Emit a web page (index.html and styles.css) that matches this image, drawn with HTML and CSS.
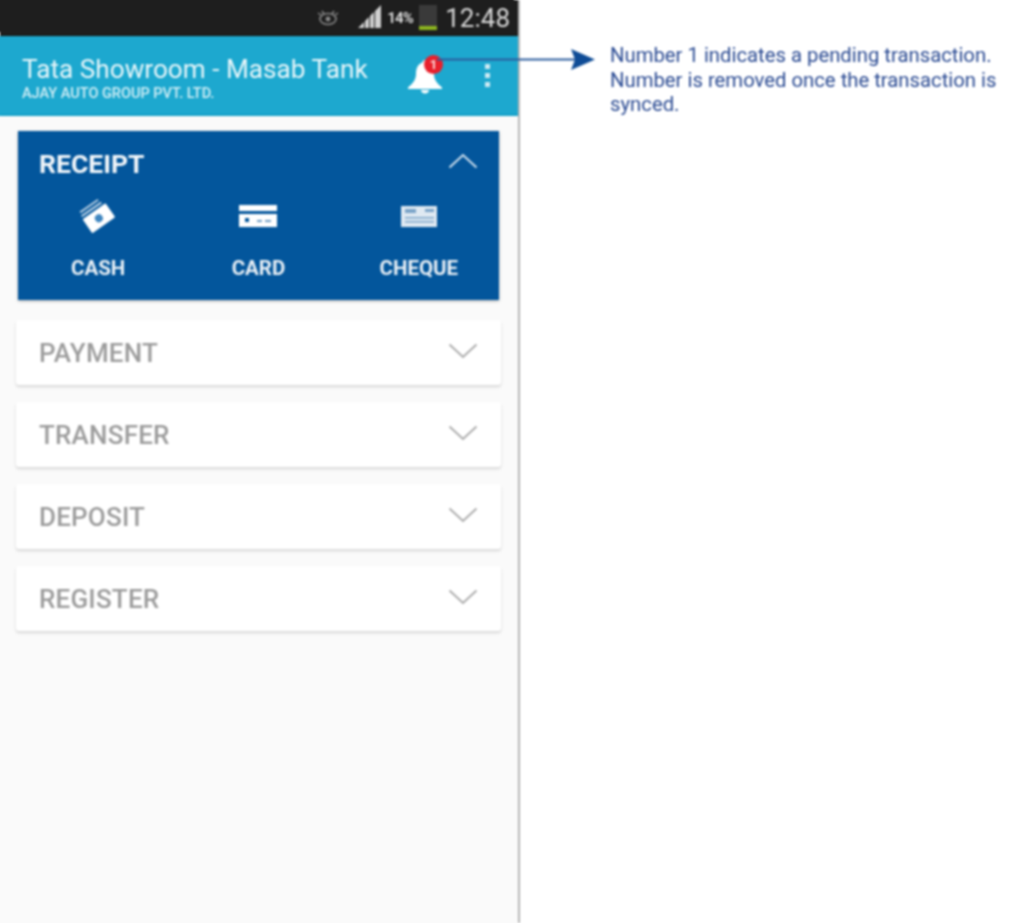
FILE: index.html
```html
<!DOCTYPE html>
<html lang="en">
  <head>
    <meta charset="UTF-8" />
    <meta name="viewport" content="width=device-width, initial-scale=1.0" />
    <title>Tata Showroom</title>
    <link rel="stylesheet" href="styles.css">
  </head>

  <body>
    <div class="page">
      <div class="phone">
        <!-- status bar -->
        <div class="statusBar">
          <svg class="eyeIcon" width="24" height="18" viewBox="0 0 24 18">
            <path d="M2 4l3 2M22 4l-3 2M6 2l2 3M18 2l-2 3" stroke="#8a8a8a" stroke-width="1.5" fill="none" />
            <ellipse cx="12" cy="10" rx="8" ry="5.5" fill="none" stroke="#8a8a8a" stroke-width="1.6" />
            <circle cx="12" cy="10" r="2.4" fill="#8a8a8a" />
          </svg>
          <svg class="signalIcon" width="26" height="24" viewBox="0 0 26 24">
            <path d="M1 23L7 17V23ZM8 16L12 12V23H8ZM13 11L17 7V23H13ZM18 6L24 0V23H18Z" fill="#d0d0d0" />
          </svg>
          <span class="battPct">14%</span>
          <div class="battery"><div class="battLevel"></div></div>
          <span class="clock">12:48</span>
        </div>

        <!-- app bar -->
        <header class="appBar">
          <div class="appTitles">
            <div class="appTitle">Tata Showroom - Masab Tank</div>
            <div class="appSub">AJAY AUTO GROUP PVT. LTD.</div>
          </div>
          <div class="bellWrap">
            <svg width="36" height="36" viewBox="0 0 36 36">
              <path d="M18 1c-1.500 0-2.500 1-2.500 2.500C10.500 5 9 10 9 15c0 5-2.500 9-8 13.500V30h34v-1.500C29.500 24 27 20 27 15c0-5-1.500-10-6.500-11.500C20.500 2 19.500 1 18 1Z" fill="#fff" />
              <path d="M14 31h8c0 2-1.800 3.500-4 3.500S14 33 14 31Z" fill="#fff" />
            </svg>
            <span class="badge">1</span>
          </div>
          <div class="dots"><i></i><i></i><i></i></div>
        </header>

        <main class="content">
          <section class="receipt">
            <div class="cardHead">
              <span class="receiptTitle">RECEIPT</span>
              <svg class="chev" width="30" height="16" viewBox="0 0 30 16">
                <path d="M1.500 14.500L15 2L28.500 14.500" fill="none" stroke="#cfe0ee" stroke-width="2" />
              </svg>
            </div>
            <div class="receiptOpts">
              <div class="opt">
                <svg width="42" height="38" viewBox="0 0 42 38">
                  <g transform="rotate(-35 21 19)" fill="#fff">
                    <rect x="9" y="4" width="22" height="2" opacity="0.7" />
                    <rect x="8" y="8" width="24" height="2" opacity="0.8" />
                    <rect x="7" y="12" width="28" height="17" rx="1" />
                    <circle cx="21" cy="20.500" r="4" fill="#3f86c0" />
                  </g>
                </svg>
                <span class="optLabel">CASH</span>
              </div>
              <div class="opt">
                <svg width="42" height="38" viewBox="0 0 42 38">
                  <rect x="2" y="7" width="38" height="6" fill="#fff" />
                  <rect x="2" y="16" width="38" height="13" fill="#fff" />
                  <rect x="8" y="20" width="4" height="4" fill="#03569c" />
                  <rect x="20" y="22" width="5" height="2" fill="#6d9cc4" />
                  <rect x="28" y="22" width="6" height="2" fill="#6d9cc4" />
                </svg>
                <span class="optLabel">CARD</span>
              </div>
              <div class="opt">
                <svg width="42" height="38" viewBox="0 0 42 38">
                  <rect x="3" y="8" width="36" height="21" fill="#dfe9f2" />
                  <rect x="7" y="11" width="11" height="4" fill="#7aa3c8" />
                  <rect x="27" y="11" width="9" height="3" fill="#7aa3c8" />
                  <rect x="7" y="19" width="29" height="1.500" fill="#7aa3c8" />
                  <rect x="7" y="23" width="29" height="1.500" fill="#7aa3c8" />
                </svg>
                <span class="optLabel">CHEQUE</span>
              </div>
            </div>
          </section>

          <div class="menuList">
            <div class="menuCard">
              <span>PAYMENT</span>
              <svg class="chev" width="30" height="16" viewBox="0 0 30 16"><path d="M1.500 1.500L15 14L28.500 1.500" fill="none" stroke="#aaa" stroke-width="1.800" /></svg>
            </div>
            <div class="menuCard">
              <span>TRANSFER</span>
              <svg class="chev" width="30" height="16" viewBox="0 0 30 16"><path d="M1.500 1.500L15 14L28.500 1.500" fill="none" stroke="#aaa" stroke-width="1.800" /></svg>
            </div>
            <div class="menuCard">
              <span>DEPOSIT</span>
              <svg class="chev" width="30" height="16" viewBox="0 0 30 16"><path d="M1.500 1.500L15 14L28.500 1.500" fill="none" stroke="#aaa" stroke-width="1.800" /></svg>
            </div>
            <div class="menuCard">
              <span>REGISTER</span>
              <svg class="chev" width="30" height="16" viewBox="0 0 30 16"><path d="M1.500 1.500L15 14L28.500 1.500" fill="none" stroke="#aaa" stroke-width="1.800" /></svg>
            </div>
          </div>
        </main>
      </div>

      <aside class="note">
        Number 1 indicates a pending transaction.<br />
        Number is removed once the transaction is<br />
        synced.
      </aside>

      <!-- arrow sits over the app bar and the white area -->
      <svg class="arrow" width="160" height="24" viewBox="0 0 160 24">
        <path d="M0 11.500H140" stroke="#2b5c9e" stroke-width="2" />
        <path d="M134 1L158 11.500L134 22L138 11.500Z" fill="#0f4c96" />
      </svg>
    </div>
  </body>
</html>
```

FILE: styles.css
```css
* {
  box-sizing: border-box;
}

html,
body {
  overflow: hidden;
}

body {
  margin: 0;
  background-color: #fff;
  font-family: Roboto, "Liberation Sans", sans-serif;
}

.page {
  position: relative;
  display: flex;
  height: 923px;
  filter: blur(0.9px);
}

/* shadows keep the blur from fading out at the window edge */
.phone {
  width: 520px;
  height: 923px;
  display: flex;
  flex-direction: column;
  background-color: #fafafa;
  border-right: 2px solid #b5b5b5;
  box-shadow: -4px 4px 0 #fafafa;
}

.statusBar {
  height: 36px;
  display: flex;
  align-items: center;
  justify-content: flex-end;
  padding-right: 8px;
  background-color: #1e1e1e;
  border-bottom: 1px solid #170f08;
  color: #d8d8d8;
  box-shadow: -4px -4px 0 #1e1e1e;
}

.eyeIcon {
  margin-right: 17px;
}

.signalIcon {
  margin-right: 4px;
  margin-bottom: 2px;
}

.battPct {
  width: 32px;
  font-size: 15px;
  font-weight: 700;
  letter-spacing: -0.8px;
}

.battery {
  width: 18px;
  height: 25px;
  margin-right: 8px;
  display: flex;
  align-items: flex-end;
  background-color: #3a3a3a;
}

.battLevel {
  width: 100%;
  height: 4px;
  background-color: #8db51f;
}

.clock {
  font-size: 26px;
  line-height: 36px;
}

.appBar {
  height: 80px;
  display: flex;
  align-items: center;
  padding-left: 22px;
  background-color: #1da8cf;
  border-bottom: 2px solid #14a0c8;
  color: #fff;
  box-shadow: -4px 0 0 #1da8cf;
}

.appTitles {
  width: 385px;
  padding-top: 4px;
}

.appTitle {
  font-size: 26.2px;
  line-height: 32px;
  color: #e8f6fa;
}

.appSub {
  margin-top: 1px;
  font-size: 14.5px;
  line-height: 16px;
  font-weight: 500;
  color: #d5eff6;
}

.bellWrap {
  position: relative;
  width: 36px;
  height: 36px;
  margin-top: 3px;
}

.badge {
  position: absolute;
  top: -4px;
  right: 0;
  width: 19px;
  height: 19px;
  border-radius: 50%;
  background-color: #e8202c;
  color: #fbdcdc;
  font-size: 13px;
  font-weight: 700;
  line-height: 19px;
  text-align: center;
}

.dots {
  margin-left: 42px;
  display: flex;
  flex-direction: column;
  gap: 4px;
}

.dots i {
  width: 5px;
  height: 5px;
  background-color: #cdeaf3;
}

.content {
  flex: 1;
  padding: 15px 17px 0 16px;
}

.receipt {
  height: 169px;
  margin: 0 2px 20px;
  padding: 0 21px;
  background-color: #03569c;
  box-shadow: 0 1px 3px rgba(0, 0, 0, 0.3);
  color: #fff;
}

.cardHead {
  height: 64px;
  display: flex;
  align-items: center;
  justify-content: space-between;
}

.receiptTitle {
  font-size: 26.5px;
  font-weight: 700;
  color: #f2f6fa;
}

.chev {
  margin-bottom: 4px;
}

.receiptOpts {
  display: grid;
  grid-template-columns: repeat(3, 1fr);
  margin: 3px -21px 0;
}

.opt {
  display: flex;
  flex-direction: column;
  align-items: center;
  gap: 20px;
}

.optLabel {
  font-size: 20.5px;
  font-weight: 700;
  line-height: 24px;
  white-space: nowrap;
  color: #e9f0f6;
}

.menuList {
  display: flex;
  flex-direction: column;
  gap: 17px;
}

.menuCard {
  height: 65px;
  display: flex;
  align-items: center;
  justify-content: space-between;
  padding: 0 23px;
  background-color: #fff;
  border-radius: 3px;
  box-shadow: 0 2px 3px rgba(0, 0, 0, 0.14);
  color: #9c9c9c;
  font-size: 26px;
  font-weight: 500;
  letter-spacing: 0.2px;
}

.note {
  margin: 43px 0 0 90px;
  font-size: 20.3px;
  line-height: 24.500px;
  white-space: nowrap;
  color: #2a4a92;
}

.arrow {
  position: absolute;
  top: 48px;
  left: 437px;
}
```
